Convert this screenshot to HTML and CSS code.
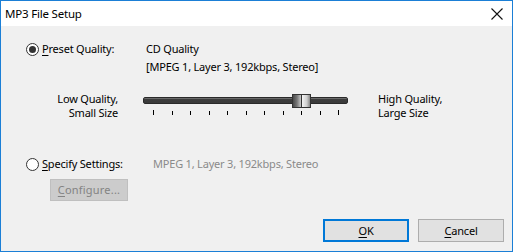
FILE: index.html
```html
<!DOCTYPE html>
<html>
<head>
<meta charset="utf-8">
<link rel="stylesheet" href="styles.css">
</head>
<body>
<div class="window">
  <div class="titlebar">
    <span class="title">MP3 File Setup</span>
    <svg class="close" width="12" height="12" viewBox="0 0 12 12"><path d="M0.5 0.5 L11.5 11.5 M11.5 0.5 L0.5 11.5" stroke="#111" stroke-width="1.1" fill="none"/></svg>
  </div>
  <div class="content">
    <div class="row preset">
      <div class="opt">
        <span class="radio checked"></span>
        <span class="lbl"><u>P</u>reset Quality:</span>
      </div>
      <div class="val">
        <div>CD Quality</div>
        <div>[MPEG 1, Layer 3, 192kbps, Stereo]</div>
      </div>
    </div>
    <div class="sliderrow">
      <div class="lo">Low Quality,<br>Small Size</div>
      <div class="slider">
        <div class="track"></div>
        <div class="thumb"><span class="tl"></span><span class="tr"></span></div>
        <div class="ticks">
          <i class="big"></i><i></i><i></i><i></i><i></i><i></i><i></i><i></i><i></i><i></i><i class="big"></i>
        </div>
      </div>
      <div class="hi">High Quality,<br>Large Size</div>
    </div>
    <div class="row specify">
      <div class="opt">
        <span class="radio"></span>
        <span class="lbl"><u>S</u>pecify Settings:</span>
      </div>
      <div class="val2">MPEG 1, Layer 3, 192kbps, Stereo</div>
    </div>
    <div class="cfgrow">
      <div class="btn disabled"><u>C</u>onfigure...</div>
    </div>
    <div class="footer">
      <div class="btn default"><u>O</u>K</div>
      <div class="btn"><u>C</u>ancel</div>
    </div>
  </div>
</div>
</body>
</html>
```
FILE: styles.css
```css
* { box-sizing: border-box; }
html, body { margin: 0; padding: 0; }
body {
  width: 513px; height: 252px; overflow: hidden;
  font-family: "Noto Sans", "Open Sans", sans-serif;
  font-size: 11px; letter-spacing: -0.2px; color: #000;
}
.window {
  width: 513px; height: 252px;
  border: 1px solid #1b7fd6;
  background: #f0f0f0;
  display: flex; flex-direction: column;
}
.titlebar {
  height: 25px; background: #fff;
  display: flex; align-items: center; justify-content: space-between;
  padding: 0 9px 0 4px;
}
.title { font-size: 11.5px; line-height: 16px; margin-top: 1px; }
.close { display: block; margin-top: 1px; }
.content {
  flex: 1; display: flex; flex-direction: column;
  padding: 15px 0 0 25px;
  line-height: 16px;
}
u { text-decoration: underline; text-underline-offset: 2px; text-decoration-thickness: 1px; }
.row { display: flex; }
.opt { width: 120px; display: flex; align-items: flex-start; }
.radio {
  width: 13px; height: 13px; border-radius: 50%;
  border: 1px solid #333; background: #fff;
  margin-top: 2px; margin-right: 3px; position: relative; flex: none;
}
.radio.checked::after {
  content: ""; position: absolute; left: 2px; top: 2px;
  width: 7px; height: 7px; border-radius: 50%; background: #333;
}
.val div + div { margin-top: 2px; }
.sliderrow { display: flex; margin-top: 17px; }
.lo { width: 92px; text-align: right; line-height: 14px; }
.hi { line-height: 14px; margin-left: 30px; }
.slider { width: 205px; margin-left: 25px; height: 24px; position: relative; }
.track {
  position: absolute; left: 0; right: 0; top: 5px; height: 7px;
  background: linear-gradient(#6a6a6a 0, #6a6a6a 1px, #3d3d3d 1px, #3a3a3a 100%);
  border: 1px solid #2a2a2a; border-radius: 2px;
}
.thumb {
  position: absolute; left: 149px; top: 2px; width: 19px; height: 14px;
  border: 1px solid #333; display: flex;
  background: #ddd;
}
.thumb .tl {
  width: 9px; height: 100%;
  background: linear-gradient(90deg, #4a4a4a, #777 50%, #c9c9c9);
  border-right: 1px solid #333;
}
.thumb .tr {
  flex: 1; height: 100%;
  background: linear-gradient(90deg, #f4f4f4, #cfcfcf 60%, #888);
}
.ticks {
  position: absolute; left: 10px; top: 18px; width: 186px; height: 6px;
  display: flex; justify-content: space-between; align-items: flex-start;
}
.ticks i { display: block; width: 1px; height: 4px; background: #000; margin-top: 1px; }
.ticks i.big { height: 5px; margin-top: 0; }
.specify { margin-top: 36px; }
.val2 { color: #8a8a8a; margin-left: 7px; }
.cfgrow { margin-top: 7px; padding-left: 24px; }
.btn {
  width: 86px; height: 23px; border: 1px solid #adadad; background: #e1e1e1;
  display: flex; align-items: center; justify-content: center;
}
.btn.disabled {
  width: 78px; height: 22px; background: #cccccc; border-color: #bfbfbf; color: #838383;
  letter-spacing: 0.2px;
}
.footer {
  margin-top: auto; margin-bottom: 9px; display: flex; justify-content: flex-end;
  gap: 9px; padding-right: 8px;
}
.btn.default { border: 2px solid #0078d7; }
```
